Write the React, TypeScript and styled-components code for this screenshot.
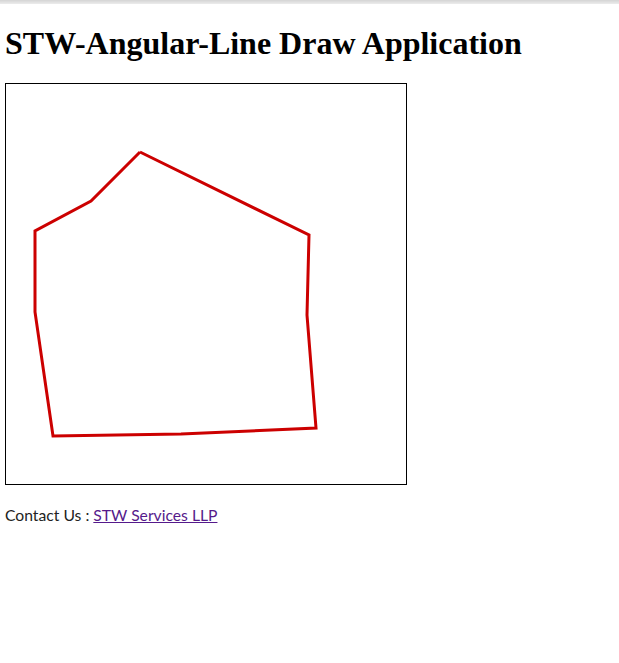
import styled, { createGlobalStyle } from 'styled-components';

const GlobalStyle = createGlobalStyle`
  body {
    margin: 0;
    background: #fff;
    font-family: "Liberation Serif", "Times New Roman", serif;
  }
`;

const TopStrip = styled.div`
  height: 4px;
  background: linear-gradient(#d4d4d4, #ececec);
`;

const Page = styled.div`
  padding: 0 5px;
`;

const Title = styled.h1`
  font-family: "Liberation Serif", "Times New Roman", serif;
  font-size: 32px;
  font-weight: bold;
  margin: 21px 0;
`;

const CanvasBox = styled.div`
  width: 400px;
  height: 400px;
  border: 1px solid #000;
`;

const Footer = styled.p`
  font-family: Lato, "Noto Sans", sans-serif;
  font-size: 15.7px;
  color: #222;
  margin: 21px 0 20px;
`;

const Link = styled.a`
  color: #551a8b;
  text-decoration: underline;
`;

// points in canvas coordinates
const points: [number, number][] = [
  [134, 68],
  [303, 151],
  [301, 231],
  [310, 344],
  [175, 350],
  [47, 352],
  [29, 228],
  [29, 147],
  [85, 117],
  [134, 68],
];

export default function App() {
  return (
    <>
      <GlobalStyle />
      <TopStrip />
      <Page>
        <Title>STW-Angular-Line Draw Application</Title>
        <CanvasBox>
          <svg width="400" height="400" viewBox="0 0 400 400">
            <polyline
              points={points.map(p => p.join(',')).join(' ')}
              fill="none"
              stroke="#cc0000"
              strokeWidth={3}
              strokeLinejoin="miter"
            />
          </svg>
        </CanvasBox>
        <Footer>
          Contact Us : <Link href="#">STW Services LLP</Link>
        </Footer>
      </Page>
    </>
  );
}
